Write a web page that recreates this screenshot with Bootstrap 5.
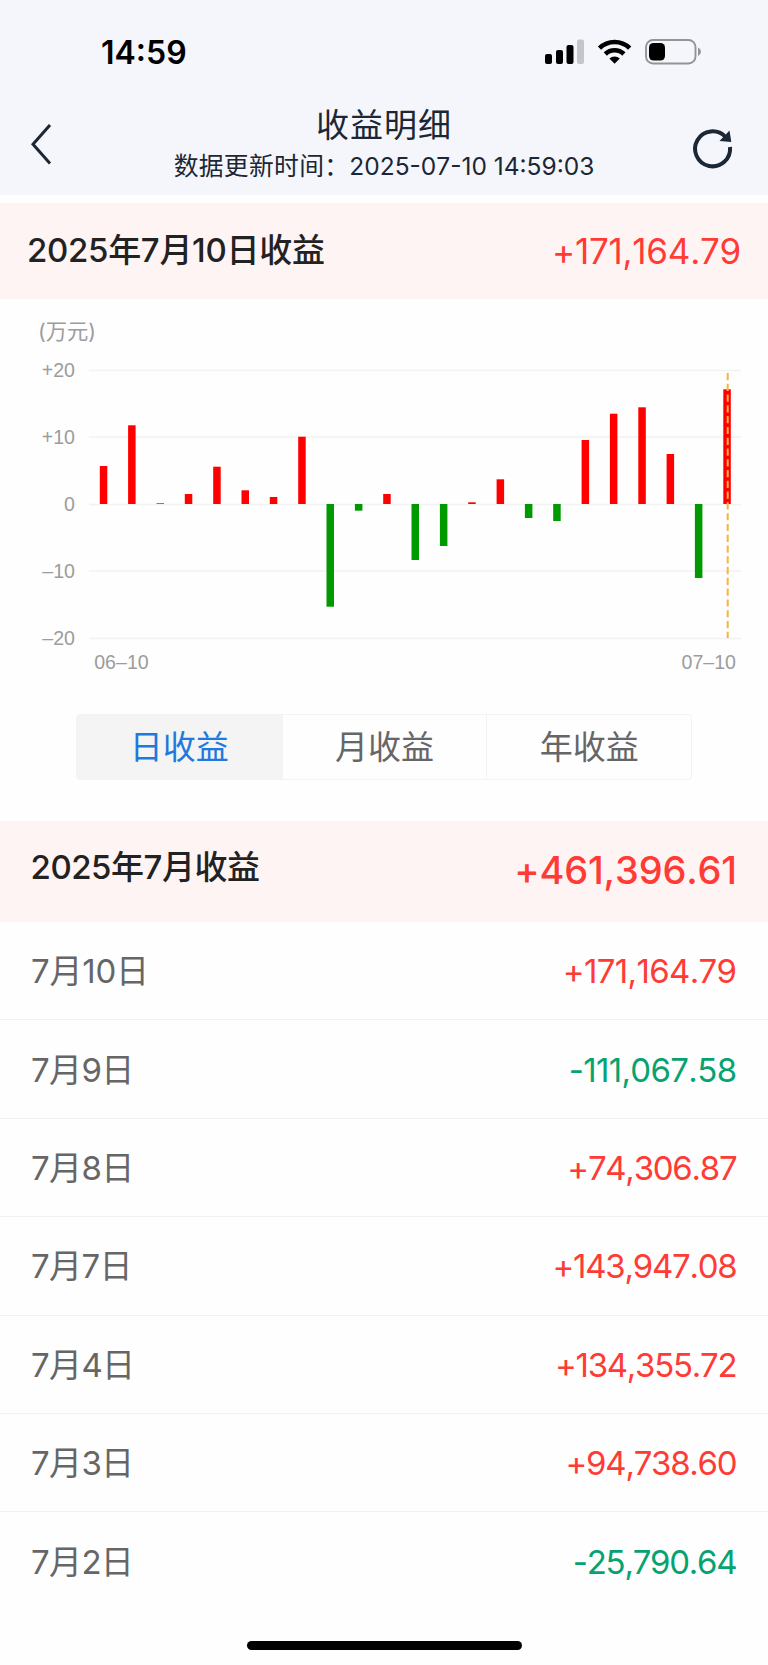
<!DOCTYPE html>
<html lang="zh-CN">
<head>
<meta charset="utf-8">
<meta name="viewport" content="width=device-width, initial-scale=1">
<title>收益明细</title>
<link href="https://cdn.jsdelivr.net/npm/bootstrap@5.3.0/dist/css/bootstrap.min.css" rel="stylesheet">
<script src="https://cdn.jsdelivr.net/npm/bootstrap@5.3.0/dist/js/bootstrap.bundle.min.js" defer></script>
<style>
  body { font-family: Inter, "Noto Sans CJK SC", sans-serif; background: #fefefe; color: #222; line-height: 1; min-height: 1665px; font-kerning: none; }
  .top-area { height: 195px; background: #f5f6fb; color: #1b2735; }
  .status-bar { height: 104px; padding: 0 67px 0 101px; color: #000; }
  .clock { font-size: 32px; font-weight: 600; padding-top: 2px; }
  .title-bar { height: 91px; padding: 0 29px; }
  .side-slot { width: 60px; }
  .page-title { font-size: 33px; letter-spacing: 1px; line-height: 40px; margin-top: 1px; }
  .page-sub { font-size: 24.5px; line-height: 36px; margin-top: 3px; white-space: nowrap; }
  .page-sub .cn { font-size: 24.8px; letter-spacing: .3px; }
  .gap-line { height: 8px; }
  .sum-band { background: #fff4f4; }
  .day-band { height: 96px; padding: 0 27px; }
  .month-band { height: 101px; padding: 0 31px 0 30.5px; }
  .band-title { font-size: 33px; font-weight: 500; letter-spacing: -.3px; }
  .day-band .band-title { padding-bottom: 2px; }
  .month-band .band-title { padding-bottom: 8px; letter-spacing: -.45px; }
  .up { color: #ff3b35; }
  .down { color: #06a370; }
  .day-total { font-size: 35px; letter-spacing: -.25px; }
  .month-total { font-size: 38px; font-weight: 500; letter-spacing: -.15px; padding-bottom: 3px; }
  .chart-area { height: 415px; }
  .chart-area text { fill: #9c9c9c; }
  .tab-group { width: 616px; height: 66px; border: 1.5px solid #f3f3f3; border-radius: 4px; font-size: 33px; color: #666; }
  .tab-cell + .tab-cell { border-left: 1.5px solid #f3f3f3; }
  .tab-cell.active { background: #f4f4f4; color: #2079dc; }
  .tab-gap { height: 41px; }
  .day-row { height: 98.4px; padding: 2px 31px 0; border-bottom: 1.5px solid #f2f2f2; font-size: 33px; color: #666; }
  .day-row:last-child { border-bottom: 0; }
  .date { letter-spacing: -.65px; }
  .date.wide { letter-spacing: -.2px; }
  .amount { letter-spacing: -1.25px; padding-right: .6px; }
  .amount.wide { letter-spacing: -.65px; }
  .home-bar { width: 275px; height: 9px; background: #000; margin-top: 30px; }
</style>
</head>
<body>
<header class="top-area">
  <div class="status-bar d-flex justify-content-between align-items-center">
    <span class="clock">14:59</span>
    <svg width="156" height="26" viewBox="545 39 156 26">
      <rect x="545" y="54" width="7" height="10" rx="2"/><rect x="556" y="50" width="7" height="14" rx="2"/>
      <rect x="566.5" y="45" width="7" height="19" rx="2"/><rect x="577" y="39.5" width="7" height="24.500" rx="2" fill="#c4c5c9"/>
      <g fill="none" stroke="#000" stroke-width="4.600"><path d="M599.500 48.200A21.500 21.500 0 0 1 629.700 48.200"/><path d="M605.300 54A13.300 13.300 0 0 1 623.900 54"/></g>
      <path d="M609.400 58.600A7.600 7.600 0 0 1 619.800 58.600L614.600 63.800Z"/>
      <rect x="646" y="40" width="49.500" height="23.500" rx="7" fill="none" stroke="#939498" stroke-width="1.900"/>
      <rect x="649" y="43" width="16" height="17.500" rx="4.500"/><path d="M698 47.500Q701 49 701 51.700T698 56Z" fill="#939498"/>
    </svg>
  </div>
  <div class="title-bar d-flex justify-content-between">
    <div class="side-slot"><svg width="60" height="91" viewBox="29 104 60 91" fill="none" stroke="#1b2735" stroke-width="3"><path d="M50 125L33 144.300 50 163.500"/></svg></div>
    <div class="text-center">
      <div class="page-title">收益明细</div>
      <div class="page-sub"><span class="cn">数据更新时间：</span><span>2025-07-10 14:59:03</span></div>
    </div>
    <div class="side-slot"><svg width="60" height="91" viewBox="679 104 60 91"><path d="M730 147A17.500 17.500 0 1 1 725.500 137" fill="none" stroke="#1b2735" stroke-width="4"/><path d="M729.500 130.500L731.300 142 719.500 141Z" fill="#1b2735"/></svg></div>
  </div>
</header>
<div class="gap-line"></div>
<section class="sum-band day-band d-flex justify-content-between align-items-center">
  <span class="band-title">2025年7月10日收益</span><span class="day-total up">+171,164.79</span>
</section>
<section class="chart-area">
  <svg class="d-block" width="768" height="415" viewBox="0 299 768 415">
    <path d="M89 370.500H741M89 437H741M89 504.500H741M89 571H741M89 638.500H741" stroke="#f2f2f2" stroke-width="1.500"/>
    <g font-family="Liberation Sans, sans-serif" font-size="19.600" text-anchor="end">
      <text x="75" y="377">+20</text><text x="75" y="444">+10</text><text x="75" y="511">0</text><text x="75" y="578">–10</text><text x="75" y="645">–20</text>
      <text x="148.700" y="669">06–10</text><text x="736" y="669">07–10</text>
    </g>
    <text x="38" y="339" font-size="21.300">(万元)</text>
    <g id="bars"></g>
    <path d="M727.700 373V638" stroke="#f8b23e" stroke-width="2" stroke-dasharray="7.200 3.580"/>
  </svg>
</section>
<div class="tab-group d-flex mx-auto">
  <div class="tab-cell active col-4 d-flex align-items-center justify-content-center">日收益</div>
  <div class="tab-cell col-4 d-flex align-items-center justify-content-center">月收益</div>
  <div class="tab-cell col-4 d-flex align-items-center justify-content-center">年收益</div>
</div>
<div class="tab-gap"></div>
<section class="sum-band month-band d-flex justify-content-between align-items-center">
  <span class="band-title">2025年7月收益</span><span class="month-total up">+461,396.61</span>
</section>
<main>
  <div class="day-row d-flex justify-content-between align-items-center"><span class="date wide">7月10日</span><span class="amount wide up">+171,164.79</span></div>
  <div class="day-row d-flex justify-content-between align-items-center"><span class="date">7月9日</span><span class="amount wide down">-111,067.58</span></div>
  <div class="day-row d-flex justify-content-between align-items-center"><span class="date">7月8日</span><span class="amount up">+74,306.87</span></div>
  <div class="day-row d-flex justify-content-between align-items-center"><span class="date">7月7日</span><span class="amount up">+143,947.08</span></div>
  <div class="day-row d-flex justify-content-between align-items-center"><span class="date">7月4日</span><span class="amount up">+134,355.72</span></div>
  <div class="day-row d-flex justify-content-between align-items-center"><span class="date">7月3日</span><span class="amount up">+94,738.60</span></div>
  <div class="day-row d-flex justify-content-between align-items-center"><span class="date">7月2日</span><span class="amount down">-25,790.64</span></div>
</main>
<div class="home-bar rounded-pill mx-auto"></div>
<script>
// Vertical end of each daily bar; the zero line is at 504.
const ends = [466, 425.3, 503.3, 494, 466.7, 490.3, 497, 436.7, 606.7, 510.7, 494, 560, 546, 502.3, 479.3, 518, 521, 440, 413.7, 407.3, 454, 578, 389.3];
document.getElementById('bars').innerHTML = ends.map((t, i) =>
  `<rect x="${(99.8 + i * 28.34).toFixed(1)}" y="${Math.min(t, 504)}" width="7.5" height="${Math.abs(504 - t).toFixed(1)}" fill="${t < 504 ? '#f00' : '#090'}"/>`).join('');
</script>
</body>
</html>
